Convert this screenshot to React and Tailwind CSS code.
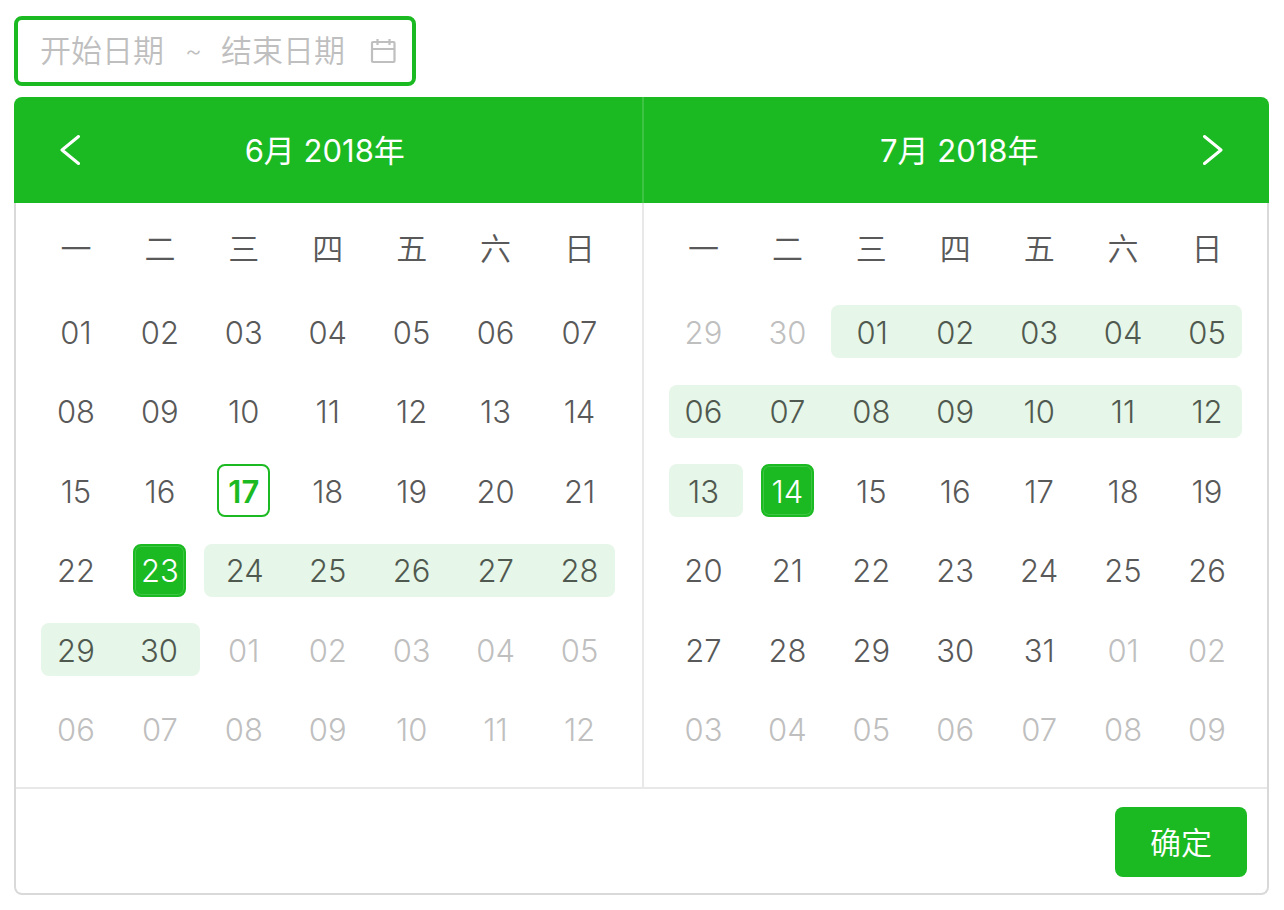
import React, { useState } from 'react';

const WEEKDAYS = ['一', '二', '三', '四', '五', '六', '日'];

// Each grid is 6 weeks: `before` days of the previous month, then the month, then the next one
const MONTHS = [
    { title: '6月 2018年', key: '2018-06', before: 0, prevLength: 31, length: 30, today: 17, start: 23, rangeFrom: 24, rangeTo: 30 },
    { title: '7月 2018年', key: '2018-07', before: 2, prevLength: 30, length: 31, end: 14, rangeFrom: 1, rangeTo: 13 },
];

const DAY_CLASSES = 'h-[53px] w-[53px] rounded-lg cursor-pointer pt-0.5';

const pad = (n) => String(n).padStart(2, '0');

const buildWeeks = (month) => {
    const weeks = [];
    for (let w = 0; w < 6; w++) {
        const week = [];
        for (let d = 0; d < 7; d++) {
            const n = w * 7 + d + 1 - month.before;
            if (n < 1) week.push({ n: month.prevLength + n, outside: true });
            else if (n > month.length) week.push({ n: n - month.length, outside: true });
            else week.push({ n, outside: false });
        }
        weeks.push(week);
    }
    return weeks;
};

function App() {
    const [startDate, setStartDate] = useState('');
    const [endDate, setEndDate] = useState('');

    return (
        <div className="bg-white pl-[14px] pr-[15px] pt-4 pb-4 text-[31px] leading-[40px] font-[350] text-[#595959] font-['Inter','Noto_Sans_CJK_SC',sans-serif]">
            {/* Range input */}
            <div className="inline-flex h-[70px] w-[402px] items-center rounded-lg border-4 border-[#1cba22] bg-white pl-[22px] pr-4 align-top text-[#bfbfbf]">
                <input
                    aria-label="开始日期"
                    placeholder="开始日期"
                    value={startDate}
                    onChange={(e) => setStartDate(e.target.value)}
                    className="w-[126px] outline-none placeholder:text-[#bfbfbf]"
                />
                <span className="w-[55px] text-center text-[26px]">~</span>
                <input
                    aria-label="结束日期"
                    placeholder="结束日期"
                    value={endDate}
                    onChange={(e) => setEndDate(e.target.value)}
                    className="w-[130px] outline-none placeholder:text-[#bfbfbf]"
                />
                <CalendarIcon />
            </div>

            {/* Calendar panel */}
            <div className="mt-[11px]">
                <div className="grid h-[106px] grid-cols-2 overflow-hidden rounded-t-lg bg-[#1cba22] font-normal text-white">
                    <div className="flex items-center pr-[82px]">
                        <button aria-label="上个月" className="h-full w-[76px] cursor-pointer pl-[46px]">
                            <Chevron points="18.5,2.5 2,16 18.5,29.5" />
                        </button>
                        <h2 className="flex-1 pt-0.5 text-center">{MONTHS[0].title}</h2>
                    </div>
                    <div className="flex items-center border-l-2 border-white/15 pl-[82px]">
                        <h2 className="flex-1 pt-0.5 text-center">{MONTHS[1].title}</h2>
                        <button aria-label="下个月" className="h-full w-[76px] cursor-pointer pl-[9px]">
                            <Chevron points="2.5,2.5 19,16 2.5,29.5" />
                        </button>
                    </div>
                </div>

                <div className="grid grid-cols-2 border-x-2 border-[#d9d9d9]">
                    <div className="pt-[3px] pr-5 pb-[18px] pl-[18px]">
                        <MonthTable month={MONTHS[0]} />
                    </div>
                    <div className="border-l-2 border-[#e8e8e8] px-[18px] pt-[3px] pb-[18px]">
                        <MonthTable month={MONTHS[1]} />
                    </div>
                </div>

                <div className="flex justify-end rounded-b-lg border-x-2 border-b-2 border-[#d9d9d9] shadow-[inset_0_2px_0_#e8e8e8] pt-5 pr-5 pb-4">
                    <button className="h-[70px] w-[132px] cursor-pointer rounded-lg bg-[#1cba22] pt-0.5 text-white">确定</button>
                </div>
            </div>
        </div>
    );
}

// ---- One month of days ----
const MonthTable = ({ month }) => (
    <table aria-label={month.title} className="h-[563px] w-full table-fixed border-collapse text-center">
        <thead>
            <tr className="h-[86px]">
                {WEEKDAYS.map((day) => (
                    <th key={day} scope="col" className="p-0 font-[350]">{day}</th>
                ))}
            </tr>
        </thead>
        <tbody>
            {buildWeeks(month).map((week, w) => (
                <tr key={w}>
                    {week.map((day, d) => (
                        <td key={d} className="p-0">
                            <Day month={month} day={day} column={d} />
                        </td>
                    ))}
                </tr>
            ))}
        </tbody>
    </table>
);

const Day = ({ month, day, column }) => {
    const { n, outside } = day;

    if (outside) {
        return <button className={`${DAY_CLASSES} text-[#bfbfbf]`}>{pad(n)}</button>;
    }
    if (n === month.start || n === month.end) {
        return (
            <button aria-pressed="true" className={`${DAY_CLASSES} border-2 border-[#1cba22] bg-[#1cba22] text-white shadow-[inset_0_0_0_1px_#3fc544]`}>
                {pad(n)}
            </button>
        );
    }
    if (n === month.today) {
        return (
            <button aria-current="date" className={`${DAY_CLASSES} border-2 border-[#1cba22] font-semibold text-[#1cba22]`}>
                {pad(n)}
            </button>
        );
    }
    if (n >= month.rangeFrom && n <= month.rangeTo) {
        // Range strip is rounded where it starts, ends or breaks to the next week
        const left = column === 0 ? 'pl-[7px]' : n === month.rangeFrom ? 'pl-[2px]' : '';
        const right = column === 6 ? 'pr-[7px]' : n === month.rangeTo ? 'pr-[2px]' : '';
        return (
            <div className={`${left} ${right}`}>
                <div className={`h-[53px] bg-[#e6f6e8] text-[#50594f] ${left && 'rounded-l-lg'} ${right && 'rounded-r-lg'} ${column === 0 && right ? 'pr-[5px]' : ''} ${column === 0 && !right ? 'pr-[7px]' : ''} ${column === 6 ? 'pl-[7px]' : ''}`}>
                    <button className={DAY_CLASSES}>{pad(n)}</button>
                </div>
            </div>
        );
    }
    return <button className={DAY_CLASSES}>{pad(n)}</button>;
};

// ---- Icons ----
const Chevron = ({ points }) => (
    <svg width="21" height="32" viewBox="0 0 21 32" fill="none" stroke="currentColor" strokeWidth="3" strokeLinecap="round" strokeLinejoin="round">
        <polyline points={points} />
    </svg>
);

const CalendarIcon = () => (
    <svg className="ml-auto" width="26" height="26" viewBox="0 0 26 26" fill="none" stroke="currentColor" strokeWidth="2.2">
        <rect x="2" y="4" width="22.5" height="20" rx="1" />
        <path d="M2 11h22.5M7.5 1v6M19.5 1v6" />
    </svg>
);

export default App;
